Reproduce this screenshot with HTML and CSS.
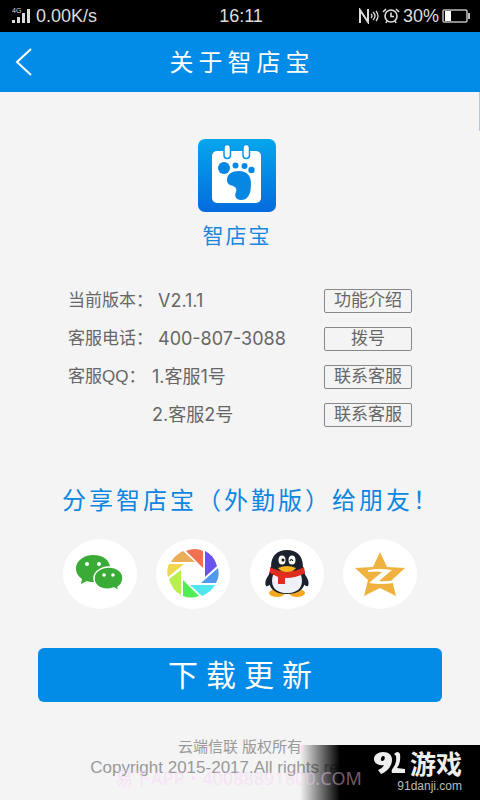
FILE: index.html
```html
<!DOCTYPE html>
<html lang="zh-CN">

<head>
    <meta charset="utf-8">
    <meta name="viewport" content="width=device-width, initial-scale=1">
    <title>关于智店宝</title>
    <link rel="stylesheet" href="styles.css">
</head>

<body>
    <div class="status">
        <div class="status__left">
            <svg class="signal" viewBox="0 0 20 18" width="20" height="18">
                <text x="0" y="6" font-size="7">4G</text>
                <path d="M0 13h3v3H0zM5 10h3v6H5zM10 6h3v10h-3zM15 2h3v14h-3z" />
            </svg>
            <span>0.00K/s</span>
        </div>
        <span>16:11</span>
        <div class="status__right">
            <svg viewBox="0 0 20 16" width="20" height="16" fill="none" stroke="#ddd">
                <path d="M1 15V2l8 12V1" stroke-width="2" />
                <path d="M12 6q2 2 0 4M14 4q4 4 0 8M17 3q4 5 0 10" stroke-width="1.3" />
            </svg>
            <svg class="alarm" viewBox="0 0 18 16" width="18" height="16" fill="none" stroke="#ddd" stroke-width="1.6">
                <circle cx="9" cy="8" r="6" />
                <path d="M9 4.500V8.500h3M1 4l3-3M17 4l-3-3M4 15l1-2M14 15l-1-2" />
            </svg>
            <span>30%</span>
            <svg class="battery" viewBox="0 0 28 14" width="28" height="14">
                <rect x="1" y="1" width="24" height="12" rx="1" fill="none" stroke="#bbb" stroke-width="1.500" />
                <path d="M26 4h2v6h-2z" fill="#bbb" />
                <path d="M3 2h6v10H3z" fill="#fff" />
            </svg>
        </div>
    </div>

    <header class="header">
        <a class="back" href="#" aria-label="返回">
            <svg viewBox="0 0 18 30" width="18" height="30">
                <path d="M16 2L2 15l14 13" fill="none" stroke="#fff" stroke-width="2" />
            </svg>
        </a>
        <h1>关于智店宝</h1>
    </header>

    <main>
        <div class="scrollbar"></div>
        <section class="app">
            <svg viewBox="0 0 78 73" width="78" height="73">
                <defs>
                    <linearGradient id="sky" x1="0" y1="0" x2="0" y2="1">
                        <stop offset="0" stop-color="#06a6ec" />
                        <stop offset="1" stop-color="#046bdd" />
                    </linearGradient>
                </defs>
                <rect width="78" height="73" rx="7" fill="url(#sky)" />
                <rect x="14" y="12" width="49" height="52" rx="5" fill="#fff" />
                <g stroke="#0799e8" stroke-width="1.500" fill="#fff">
                    <rect x="26" y="5.500" width="6.500" height="14" rx="3.200" />
                    <rect x="45" y="5.500" width="6.500" height="14" rx="3.200" />
                </g>
                <g fill="#0687e4">
                    <circle cx="26" cy="29" r="6" />
                    <circle cx="37.500" cy="26.500" r="3" />
                    <circle cx="46.500" cy="27" r="3" />
                    <circle cx="53.500" cy="31" r="3.200" />
                    <path d="M29 41c0-6 5-9 12-9 8 0 12 5 12 13 0 10-3 16-10 16-5 0-7-4-5-8 1-3 0-5-3-6s-6-2-6-6z" />
                </g>
            </svg>
            <h2>智店宝</h2>
        </section>

        <section class="info">
            <div class="row">
                <span class="label">当前版本：</span>
                <span class="value">V2.1.1</span>
                <button type="button">功能介绍</button>
            </div>
            <div class="row">
                <span class="label">客服电话：</span>
                <span class="value">400-807-3088</span>
                <button type="button">拨号</button>
            </div>
            <div class="row">
                <span class="label label--qq">客服QQ：</span>
                <span class="value">1.客服1号</span>
                <button type="button">联系客服</button>
            </div>
            <div class="row">
                <span class="label label--qq"></span>
                <span class="value">2.客服2号</span>
                <button type="button">联系客服</button>
            </div>
        </section>

        <section class="share">
            <h2>分享智店宝（外勤版）给朋友！</h2>
            <div class="share__list">
                <a href="#" aria-label="微信">
                    <svg viewBox="0 0 74 70">
                        <g fill="#3bab38">
                            <path d="M30 16c-9 0-17 6-17 13 0 5 2 8 6 11l-1 5 6-3c2 1 4 1 7 1 8 0 16-5 16-14s-8-13-17-13z" />
                            <path d="M46 28c8 0 14 5 14 11 0 4-2 7-5 9l1 4-5-3c-12 4-20-2-20-10 0-6 7-11 15-11z" stroke="#fff" stroke-width="1.500" />
                        </g>
                        <g fill="#fff">
                            <circle cx="24" cy="25" r="2" />
                            <circle cx="36" cy="25" r="2" />
                            <circle cx="41" cy="36" r="1.800" />
                            <circle cx="50" cy="36" r="1.800" />
                        </g>
                    </svg>
                </a>
                <a href="#" aria-label="朋友圈">
                    <svg viewBox="0 0 74 70">
                        <path d="M30 12q9-4 17 0v17z" fill="#f07052" />
                        <path d="M49 12q9 4 12 15L49 38z" fill="#6a54ef" />
                        <path d="M62 29q2 8-2 15H45z" fill="#5298ec" />
                        <path d="M59 46q-4 7-13 11L34 46z" fill="#51e5ee" />
                        <path d="M43 57q-8 3-16 0V41z" fill="#51ed55" />
                        <path d="M25 56q-9-5-12-16l12-9z" fill="#b7ef52" />
                        <path d="M12 38q-2-7 1-13h15z" fill="#efd751" />
                        <path d="M15 23q4-7 12-11l12 11z" fill="#eaad59" />
                    </svg>
                </a>
                <a href="#" aria-label="QQ">
                    <svg viewBox="0 0 74 70">
                        <path d="M22 32c-5 5-8 11-6 15 2 1 5-2 7-5M52 32c5 5 8 11 6 15-2 1-5-2-7-5" fill="#1c222d" />
                        <ellipse cx="27" cy="54" rx="8" ry="4" fill="#f6a81c" />
                        <ellipse cx="47" cy="54" rx="8" ry="4" fill="#f6a81c" />
                        <path d="M21 28c0-12 7-17 16-17s16 5 16 17c5 14 3 27-16 27S16 42 21 28z" fill="#1c222d" />
                        <path d="M23 36h28c3 10-1 18-14 18s-17-8-14-18z" fill="#eef2f7" />
                        <ellipse cx="32" cy="21" rx="3.500" ry="4.500" fill="#fff" />
                        <ellipse cx="42" cy="21" rx="3.500" ry="4.500" fill="#fff" />
                        <circle cx="33" cy="21" r="1.500" fill="#111" />
                        <path d="M40 22q1-3 3 0" fill="none" stroke="#111" stroke-width="1.200" />
                        <path d="M20 28q17 9 34 0l1 6q-8 5-20 5v6h-7v-7l-8-4z" fill="#df2e1f" />
                        <path d="M28 29q9-4 18 0-3 4-9 4t-9-4z" fill="#f8b51f" />
                    </svg>
                </a>
                <a href="#" aria-label="QQ空间">
                    <svg viewBox="0 0 74 70">
                        <path d="M37 13l7 15 18 1-13 12 4 16-16-8-16 8 4-16-13-12 18-1z" fill="#efb23e" />
                        <path d="M25 31q12-2 24 0L36 42q8 1 15-1l-1 3q-12 2-24 0l13-11q-7-1-14 0z" fill="#fff" />
                    </svg>
                </a>
            </div>
        </section>

        <button class="update" type="button">下载更新</button>
    </main>

    <footer>
        <p class="owner">云端信联 版权所有</p>
        <p>Copyright 2015-2017.All rights reserved</p>
        <div class="site">
            <div class="site__name">
                <svg viewBox="0 0 32 24" width="32" height="24" fill="#eee">
                    <path d="M9 1c6 0 9 3 9 8 0 6-5 12-11 14l-3-4c3-1 5-3 6-5-6 1-10-2-10-6 0-4 4-7 9-7zM9 5c-2 0-3 5-1 5 3 0 4-5 1-5z" fill-rule="evenodd" />
                    <path d="M20 3q4-4 6 0 1 9-3 14l8 1v4H18q-1-3 1-5 4-5 3-12z" />
                </svg>
                <span>游戏</span>
            </div>
            <span class="site__url">91danji.com</span>
        </div>
        <span class="mark">易下APP・40088891800.COM</span>
    </footer>
</body>

</html>
```
FILE: styles.css
```css
* {
    box-sizing: border-box;
}

body {
    margin: 0;
    min-height: 100vh;
    display: flex;
    flex-flow: column;
    background-color: #f4f4f4;
    color: #666;
    font-family: "Liberation Sans", "Noto Sans CJK SC", sans-serif;
    font-size: 17px;
}

h1,
h2,
p {
    margin: 0;
    font-weight: 400;
}

svg {
    display: block;
}

.status {
    display: flex;
    align-items: center;
    height: 32px;
    padding: 0 10px 0 12px;
    background-color: #000;
    color: #ddd;
    font-size: 18px;
}

.status__left,
.status__right {
    flex: 1;
    display: flex;
    align-items: center;
    gap: 4px;
}

.status__right {
    justify-content: flex-end;
    gap: 3px;
}

.signal {
    fill: #ddd;
}

.header {
    display: flex;
    align-items: center;
    height: 60px;
    padding: 0 15px;
    background-color: #038be8;
    color: #fff;
}

.header h1 {
    flex: 1;
    padding: 2px 14px 0 0;
    font-size: 24px;
    line-height: 36px;
    letter-spacing: 5px;
    text-align: center;
}

main {
    position: relative;
    padding: 47px 38px 0;
}

.scrollbar {
    position: absolute;
    top: 0;
    right: 0;
    width: 1px;
    height: 39px;
    background-color: #b4c6da;
}

.app {
    display: flex;
    flex-flow: column;
    align-items: center;
    gap: 8px;
    padding-right: 6px;
    color: #1a87dc;
}

.app h2 {
    font-size: 21px;
    line-height: 32px;
    letter-spacing: 2px;
}

.info {
    margin: 37px 30px 0;
    display: flex;
    flex-flow: column;
    gap: 14px;
}

.row {
    display: flex;
    align-items: center;
    line-height: 24px;
}

.label {
    width: 90px;
}

.label--qq {
    width: 84px;
}

.value {
    flex: 1;
    font-family: Inter, "Noto Sans CJK SC", sans-serif;
    font-size: 18px;
}

.row button {
    width: 88px;
    height: 24px;
    padding: 0;
    border: 1px solid #888;
    border-radius: 2px;
    background: none;
    color: #666;
    font: inherit;
    line-height: 20px;
}

.share {
    margin-top: 56px;
    color: #0d86e2;
}

.share h2 {
    padding-left: 24px;
    font-size: 24px;
    line-height: 36px;
    letter-spacing: 3px;
    white-space: nowrap;
}

.share__list {
    display: flex;
    justify-content: space-between;
    margin: 20px 25px 0;
}

.share__list a {
    width: 74px;
    height: 70px;
    border-radius: 50%;
    background-color: #fff;
}

.update {
    width: 100%;
    height: 54px;
    margin-top: 39px;
    padding: 0 0 4px 8px;
    border: 0;
    border-radius: 6px;
    background-color: #038be8;
    color: #fff;
    font: inherit;
    font-size: 30px;
    letter-spacing: 8px;
}

footer {
    position: relative;
    flex: 1;
    padding-top: 34px;
    color: #999;
    line-height: 21px;
    text-align: center;
}

.owner {
    font-size: 15px;
}

.site {
    position: absolute;
    right: 0;
    bottom: 0;
    width: 180px;
    height: 55px;
    padding: 6px 18px 0;
    display: flex;
    flex-flow: column;
    align-items: flex-end;
    background: linear-gradient(to right, transparent, #000 40px);
    color: #eee;
}

.site__name {
    display: flex;
    gap: 4px;
    font-size: 26px;
    font-weight: 700;
    line-height: 28px;
}

.site__url {
    color: #bbb;
    font-size: 12px;
    line-height: 14px;
}

.mark {
    position: absolute;
    bottom: 12px;
    left: 115px;
    color: rgba(250, 205, 250, 0.45);
    font-family: "Noto Sans", "Noto Sans CJK SC", sans-serif;
    font-size: 18px;
    line-height: 20px;
    white-space: nowrap;
}
```
